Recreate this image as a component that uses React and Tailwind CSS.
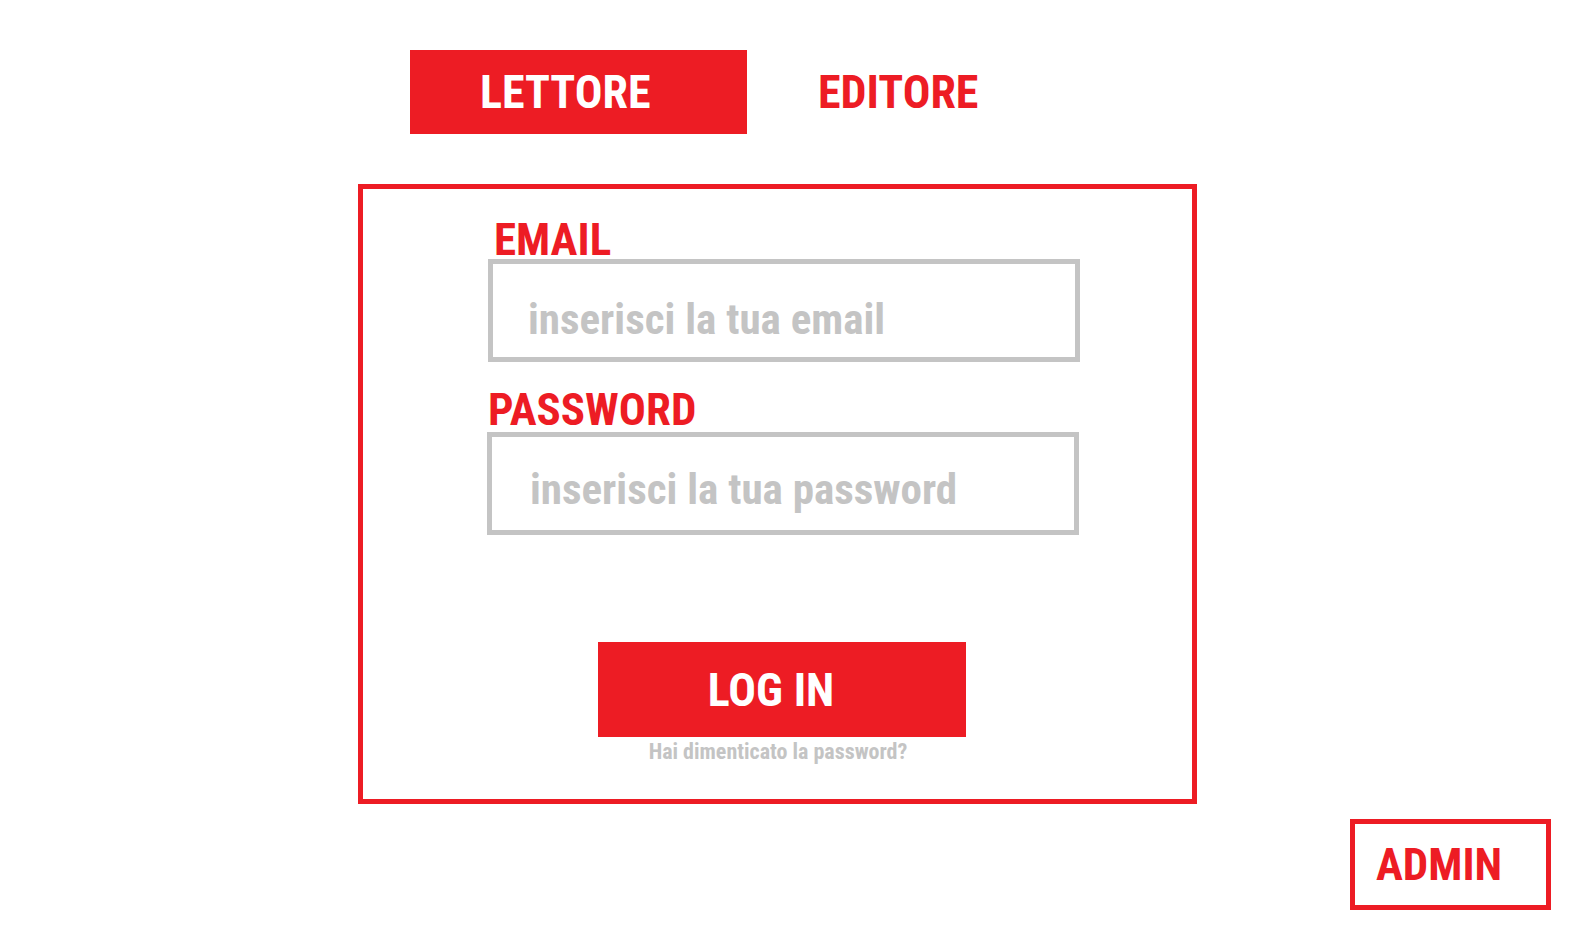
import React, { useState } from 'react';

const LoginPage = () => {
  const [role, setRole] = useState("LETTORE");
  const [email, setEmail] = useState("");
  const [password, setPassword] = useState("");

  return (
    <div className="w-full min-h-[934px] bg-white font-['Roboto_Condensed','Roboto',sans-serif] [font-stretch:75%] font-bold">
      <div className="pl-[358px] pt-[50px]">
        {/* Role tabs */}
        <div className="flex items-center ml-[52px]">
          {["LETTORE", "EDITORE"].map((r) =>
            role === r ? (
              <button
                key={r}
                onClick={() => setRole(r)}
                className="w-[337px] h-[84px] bg-[#ED1C24] text-white text-[46px] leading-none pl-[70px] text-left"
              >
                {r}
              </button>
            ) : (
              <button
                key={r}
                onClick={() => setRole(r)}
                className="h-[84px] text-[#ED1C24] text-[46px] leading-none pl-[71px] text-left"
              >
                {r}
              </button>
            )
          )}
        </div>

        {/* Login box */}
        <div className="mt-[50px] w-[839px] h-[620px] border-[5px] border-[#ED1C24] pt-[31px] flex flex-col">
          <label className="ml-[131px] h-[39px] leading-[39px] text-[45px] text-[#ED1C24]">EMAIL</label>
          <input
            type="email"
            value={email}
            onChange={(e) => setEmail(e.target.value)}
            placeholder="inserisci la tua email"
            className="ml-[125px] w-[592px] h-[103px] border-[5px] border-[#C4C4C4] pl-[35px] pt-[16px] text-[43px] font-bold text-gray-600 placeholder:text-[#C4C4C4] outline-none"
          />

          <label className="mt-[28px] ml-[125px] h-[39px] leading-[39px] text-[45px] text-[#ED1C24]">PASSWORD</label>
          <input
            type="password"
            value={password}
            onChange={(e) => setPassword(e.target.value)}
            placeholder="inserisci la tua password"
            className="mt-[3px] ml-[124px] w-[592px] h-[103px] border-[5px] border-[#C4C4C4] pl-[38px] pt-[10px] text-[43px] font-bold text-gray-600 placeholder:text-[#C4C4C4] outline-none"
          />

          <button className="mt-[107px] ml-[235px] w-[368px] h-[95px] bg-[#ED1C24] text-white text-[46px] leading-none pr-[22px]">
            LOG IN
          </button>
          <p className="mt-[4px] ml-[235px] w-[368px] pr-[8px] text-center text-[22px] leading-none text-[#C4C4C4]">
            Hai dimenticato la password?
          </p>
        </div>
      </div>

      {/* Admin */}
      <div className="flex justify-end pr-[19px] mt-[15px]">
        <button className="w-[201px] h-[91px] border-[5px] border-[#ED1C24] flex items-center pl-[21px] text-[#ED1C24] text-[45px] leading-none">
          ADMIN
        </button>
      </div>
    </div>
  );
};

export default function App() {
  return <LoginPage />;
}
